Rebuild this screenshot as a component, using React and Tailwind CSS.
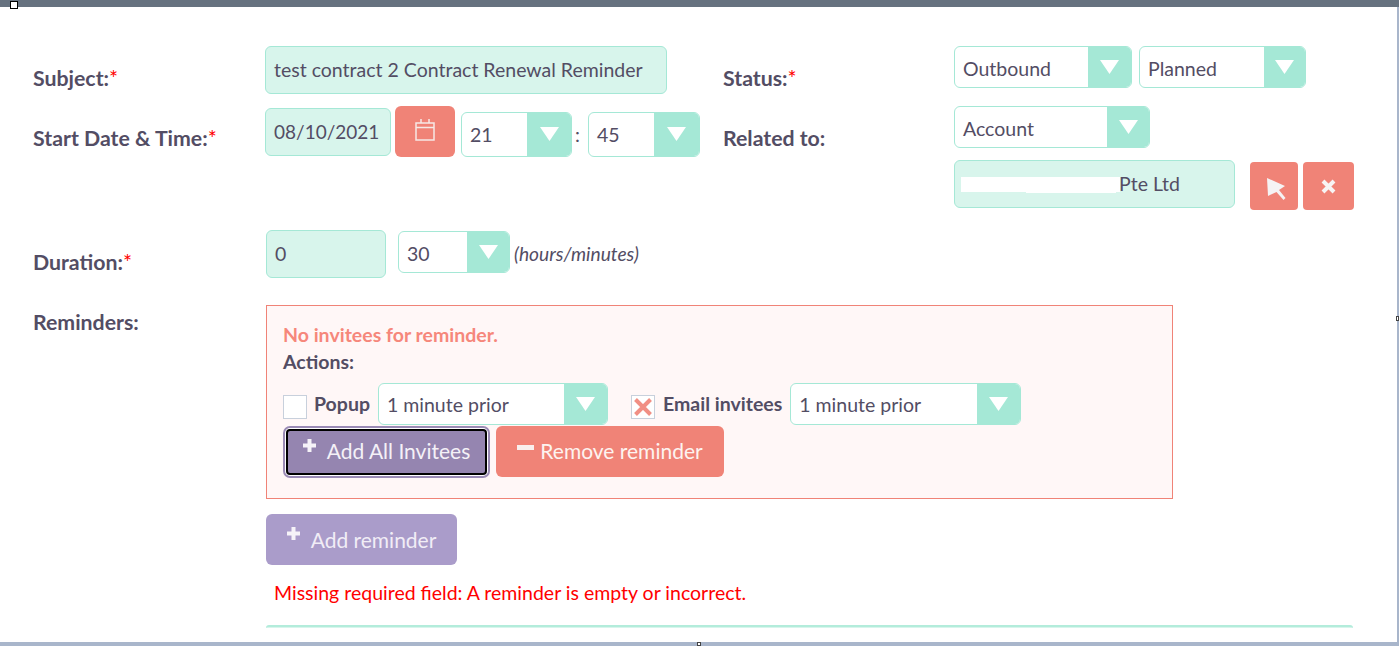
import React from 'react';

const Label = ({ text, required = false, className = 'pt-[20px]' }) => (
  <div className={`${className} text-[21.3px] leading-6 font-bold text-[#534d64]`}>
    {text}
    {required && <span className="text-[#ff0000] font-normal">*</span>}
  </div>
);

const TextField = ({ value, className = '' }) => (
  <div className={`flex items-center px-2 border border-[#a5e8d6] bg-[#d8f5ec] rounded-[6px] text-[19.5px] text-[#534d64] ${className}`}>
    {value}
  </div>
);

const Select = ({ value, className = '', arrow = 'w-[43px]', textPad = 'pt-[1px]' }) => (
  <div className={`flex items-stretch border border-[#a5e8d6] bg-white rounded-[6px] overflow-hidden text-[19.5px] text-[#534d64] ${className}`}>
    <div className={`flex-1 flex items-center pl-2 ${textPad}`}>{value}</div>
    <div className={`${arrow} bg-[#a5e8d6] flex items-center justify-center`}>
      <svg width="19" height="14" viewBox="0 0 19 14" className="mb-[1px]">
        <path d="M0 0H19L9.5 14Z" fill="#fff" />
      </svg>
    </div>
  </div>
);

const Plus = () => (
  <svg width="13" height="13" viewBox="0 0 13 13" className="mb-[12px] shrink-0">
    <path d="M4.5 0H8.5V4.5H13V8.5H8.5V13H4.5V8.5H0V4.5H4.5Z" fill="#f6f3f8" />
  </svg>
);

const Checkbox = ({ checked = false, className = '' }) => (
  <div className={`w-[24px] h-[24px] border border-[#c8d0dc] bg-white flex items-center justify-center shrink-0 ${className}`}>
    {checked && (
      <svg width="20" height="20" viewBox="0 0 20 20" className="opacity-90">
        <path d="M2.5 2.5L17.5 17.5M17.5 2.5L2.5 17.5" stroke="#f08377" strokeWidth="4" />
      </svg>
    )}
  </div>
);

const App = () => {
  return (
    <div className="relative w-[1399px] h-[646px] overflow-hidden bg-white font-['Lato','Open_Sans',sans-serif]">
      {/* window chrome */}
      <div className="h-[7px] bg-[#66727f]"></div>
      <div className="absolute left-[10px] top-[1px] w-[8px] h-[8px] bg-white border border-black"></div>
      <div className="absolute right-0 top-[7px] bottom-0 w-[2px] bg-[#a9b6cb]"></div>
      <div className="absolute right-0 top-[316px] w-[3px] h-[5px] bg-white border border-[#444]"></div>
      <div className="absolute left-0 right-0 bottom-0 h-[4px] bg-[#a9b6cb]"></div>
      <div className="absolute left-[697px] bottom-0 w-[4px] h-[4px] bg-white border border-[#444]"></div>

      <div className="pl-[33px] pt-[39px]">
        <div className="grid grid-cols-[232px_458px_231px_1fr] grid-rows-[60px_124px_75px]">
          {/* row 1 */}
          <Label text="Subject:" required />
          <TextField value="test contract 2 Contract Renewal Reminder" className="w-[402px] h-[48px]" />
          <Label text="Status:" required />
          <div className="flex gap-[7px]">
            <Select value="Outbound" className="w-[178px] h-[42px]" textPad="pt-[4px]" />
            <Select value="Planned" className="w-[167px] h-[42px]" arrow="w-[41px]" textPad="pt-[4px]" />
          </div>

          {/* row 2 */}
          <Label text="Start Date & Time:" required />
          <div className="flex items-start">
            <TextField value={<span className="text-[19px]">08/10/2021</span>} className="w-[126px] h-[48px] mt-[2px]" />
            <button className="w-[60px] h-[51px] ml-[4px] bg-[#f08377] rounded-[6px] flex items-center justify-center">
              <svg width="20" height="22" viewBox="0 0 20 22" fill="none" stroke="#f6e9e6" strokeWidth="1.5" className="mb-[4px]">
                <rect x="1" y="4" width="18" height="17" />
                <path d="M1 8.5H19M6 0V4M14 0V4" />
              </svg>
            </button>
            <Select value="21" className="w-[111px] h-[45px] ml-[6px] mt-[6px]" arrow="w-[44px]" />
            <span className="w-[16px] pl-[3px] mt-[17px] text-[19.5px] leading-6 text-[#534d64]">:</span>
            <Select value="45" className="w-[112px] h-[45px] mt-[6px]" arrow="w-[45px]" />
          </div>
          <Label text="Related to:" />
          <div className="flex flex-col items-start">
            <Select value="Account" className="w-[196px] h-[42px]" arrow="w-[42px]" textPad="pt-[3px]" />
            <div className="flex mt-[12px]">
              <div className="relative">
                <TextField value="Pte Ltd" className="w-[281px] h-[48px] pl-[164px]" />
                {/* name blanked out in the screenshot */}
                <div className="absolute left-[7px] top-[17px] w-[159px] h-[15px] bg-white"></div>
                <div className="absolute left-[72px] top-[20px] w-[90px] h-[13px] bg-white"></div>
              </div>
              <button className="w-[48px] h-[48px] ml-[15px] mt-[2px] bg-[#f08377] rounded-[4px] flex items-center justify-center">
                <svg width="20" height="22" viewBox="0 0 20 22" className="mt-[6px] ml-[6px]">
                  <path d="M0 0L18 8L12 12L18.5 20L16.5 22L9.5 14L1 18Z" fill="#f5f3f4" />
                </svg>
              </button>
              <button className="w-[51px] h-[48px] ml-[5px] mt-[2px] bg-[#f08377] rounded-[4px] flex items-center justify-center">
                <svg width="15" height="15" viewBox="0 0 15 15">
                  <path d="M2 2L13 13M13 2L2 13" stroke="#f7f4f4" strokeWidth="4" />
                </svg>
              </button>
            </div>
          </div>

          {/* row 3 */}
          <Label text="Duration:" required />
          <div className="col-span-3 flex items-start">
            <TextField value="0" className="w-[120px] h-[48px] ml-[1px]" />
            <Select value="30" className="w-[112px] h-[42px] ml-[12px] mt-[1px]" arrow="w-[42px]" textPad="pt-[3px]" />
            <span className="ml-[4px] mt-[12px] text-[19.2px] leading-6 italic text-[#534d64]">(hours/minutes)</span>
          </div>
        </div>

        {/* reminders */}
        <div className="flex">
          <Label text="Reminders:" className="w-[233px] pt-[5px]" />
          <div>
            <div className="w-[907px] h-[194px] border border-[#f08377] bg-[#fff7f7] pl-[16px] pt-[17px]">
              <div className="text-[19.5px] leading-6 font-bold text-[#f6877b]">No invitees for reminder.</div>
              <div className="text-[19.5px] leading-[30px] font-bold text-[#534d64]">Actions:</div>
              <div className="flex items-start mt-[6px]">
                <Checkbox className="mt-[12px]" />
                <span className="ml-[7px] mr-[8px] mt-[9px] text-[19.5px] leading-6 font-bold text-[#534d64]">Popup</span>
                <Select value="1 minute prior" className="w-[230px] h-[42px]" />
                <Checkbox checked className="ml-[23px] mt-[12px]" />
                <span className="ml-[8px] mr-[8px] mt-[9px] text-[19.5px] leading-6 font-bold text-[#534d64]">Email invitees</span>
                <Select value="1 minute prior" className="w-[231px] h-[42px]" />
              </div>
              <div className="flex items-start mt-[1px]">
                <button className="w-[201px] h-[46px] mt-[3px] ml-[3px] pb-[2px] border-2 border-black rounded-[4px] bg-[#9585b0] shadow-[0_0_0_1px_#fff,0_0_0_3px_#9a8ab5] flex items-center justify-center gap-[11px] text-[21px] text-[#f4f1f7]">
                  <Plus />
                  <span>Add All Invitees</span>
                </button>
                <button className="w-[228px] h-[51px] ml-[9px] pb-[2px] bg-[#f08377] rounded-[6px] flex items-center justify-center gap-[6px] text-[21px] text-[#fdf3f0]">
                  <span className="block w-[17px] h-[5px] mb-[6px] bg-[#f9efed]"></span>
                  <span>Remove reminder</span>
                </button>
              </div>
            </div>
            <button className="mt-[15px] w-[191px] h-[51px] bg-[#aa9cca] rounded-[6px] flex items-center justify-center gap-[11px] text-[21px] text-[#f1edf6]">
              <Plus />
              <span>Add reminder</span>
            </button>
            <div className="mt-[16px] ml-[8px] text-[19.5px] leading-6 text-[#ff0000]">
              Missing required field: A reminder is empty or incorrect.
            </div>
            {/* next panel, cut off by the screenshot */}
            <div className="mt-[20px] w-[1087px] h-[3px] border-t-2 border-[#b3ecdb] rounded-t-[6px] bg-[#d8f5ec]"></div>
          </div>
        </div>
      </div>
    </div>
  );
};

export default App;
